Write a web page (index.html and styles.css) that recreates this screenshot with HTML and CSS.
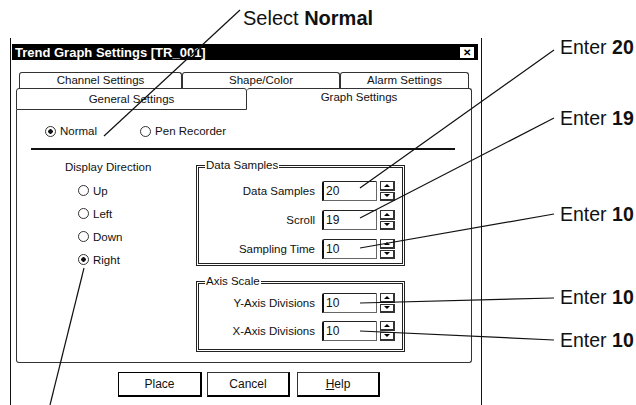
FILE: index.html
```html
<!doctype html>
<html lang="en">
    <head>
        <meta charset="UTF-8" />
        <title>Trend Graph Settings</title>
        <link rel="stylesheet" href="styles.css">
    </head>
    <body>
        <div class="note-top">Select <b>Normal</b></div>

        <div class="stage">
            <div class="dialog">
                <div class="titlebar">
                    <span>Trend Graph Settings [TR_001]</span>
                    <span class="close">&#x2715;</span>
                </div>

                <div class="tabs tabs-back">
                    <div class="tab t-channel">Channel Settings</div>
                    <div class="tab t-shape">Shape/Color</div>
                    <div class="tab t-alarm">Alarm Settings</div>
                </div>
                <div class="tabs tabs-front">
                    <div class="tab t-general">General Settings</div>
                    <div class="tab t-graph">Graph Settings</div>
                </div>

                <div class="panel">
                    <div class="mode-row">
                        <label class="radio on"><i></i>Normal</label>
                        <label class="radio"><i></i>Pen Recorder</label>
                    </div>
                    <div class="rule"></div>

                    <div class="panel-body">
                        <div class="direction">
                            <div class="dir-title">Display Direction</div>
                            <div class="dir-list">
                                <label class="radio"><i></i>Up</label>
                                <label class="radio"><i></i>Left</label>
                                <label class="radio"><i></i>Down</label>
                                <label class="radio on"><i></i>Right</label>
                            </div>
                        </div>

                        <div class="groups">
                            <div class="group g-data">
                                <span class="legend">Data Samples</span>
                                <div class="field">
                                    <span class="flabel">Data Samples</span>
                                    <span class="box">20</span>
                                    <span class="spin"><b class="up"></b><b class="down"></b></span>
                                </div>
                                <div class="field">
                                    <span class="flabel">Scroll</span>
                                    <span class="box">19</span>
                                    <span class="spin"><b class="up"></b><b class="down"></b></span>
                                </div>
                                <div class="field">
                                    <span class="flabel">Sampling Time</span>
                                    <span class="box">10</span>
                                    <span class="spin"><b class="up"></b><b class="down"></b></span>
                                </div>
                            </div>

                            <div class="group g-axis">
                                <span class="legend">Axis Scale</span>
                                <div class="field">
                                    <span class="flabel">Y-Axis Divisions</span>
                                    <span class="box">10</span>
                                    <span class="spin"><b class="up"></b><b class="down"></b></span>
                                </div>
                                <div class="field">
                                    <span class="flabel">X-Axis Divisions</span>
                                    <span class="box">10</span>
                                    <span class="spin"><b class="up"></b><b class="down"></b></span>
                                </div>
                            </div>
                        </div>
                    </div>
                </div>

                <div class="buttons">
                    <button class="btn default">Place</button>
                    <button class="btn">Cancel</button>
                    <button class="btn"><u>H</u>elp</button>
                </div>
            </div>

            <ul class="callouts">
                <li class="c1">Enter <b>20</b></li>
                <li class="c2">Enter <b>19</b></li>
                <li class="c3">Enter <b>10</b></li>
                <li class="c4">Enter <b>10</b></li>
                <li class="c5">Enter <b>10</b></li>
            </ul>
        </div>

        <!-- leader lines from the callouts to the controls -->
        <svg class="leaders" width="636" height="405" viewBox="0 0 636 405">
            <g stroke="#111" stroke-width="1.2" fill="none">
                <line x1="240" y1="10" x2="104" y2="136" />
                <line x1="554" y1="50" x2="360" y2="188" />
                <line x1="554" y1="118" x2="360" y2="218" />
                <line x1="554" y1="214" x2="360" y2="248" />
                <line x1="554" y1="298" x2="360" y2="303" />
                <line x1="554" y1="340" x2="360" y2="331" />
                <line x1="84" y1="268" x2="50" y2="405" />
            </g>
        </svg>
    </body>
</html>
```

FILE: styles.css
```css
* {
    box-sizing: border-box;
}
body {
    margin: 0;
    width: 636px;
    height: 405px;
    overflow: hidden;
    position: relative;
    background: #fff;
    color: #111;
    font-family: "Liberation Sans", Arial, sans-serif;
}

/* callout text */
.note-top {
    height: 38px;
    padding: 7px 0 0 243px;
    font-size: 20px;
    line-height: 22px;
}
.stage {
    display: flex;
    align-items: flex-start;
}
.callouts {
    flex: none;
    list-style: none;
    margin: 0;
    padding: 0 0 0 78px;
    font-size: 19.5px;
    line-height: 20px;
    white-space: nowrap;
}
.c1 { margin-top: -1px; }
.c2 { margin-top: 51px; }
.c3 { margin-top: 76px; }
.c4 { margin-top: 63px; }
.c5 { margin-top: 23px; }

/* dialog window */
.dialog {
    flex: none;
    margin-left: 10px;
    width: 472px;
    height: 367px;
    border-left: 1px solid #111;
    border-right: 1px solid #111;
    padding: 6px 3px 0 1px;
    font-size: 11.5px;
}
.titlebar {
    height: 16px;
    background: #000;
    color: #fff;
    font-size: 13px;
    font-weight: bold;
    display: flex;
    align-items: center;
    justify-content: space-between;
    padding: 0 3px 0 3px;
}
.close {
    width: 16px;
    height: 13px;
    background: #fff;
    color: #000;
    border: 1px solid #000;
    font-size: 10px;
    line-height: 11px;
    text-align: center;
}

/* tabs */
.tabs {
    display: flex;
}
.tabs-back {
    margin: 12px 0 0 7px;
}
.tabs-front {
    margin: 0 6px 0 4px;
}
.tab {
    height: 16px;
    border: 1px solid #333;
    border-bottom: none;
    border-radius: 3px 3px 0 0;
    text-align: center;
    line-height: 15px;
}
.t-channel { width: 163px; }
.t-shape { width: 158px; }
.t-alarm { width: 129px; }
.t-general {
    width: 231px;
    height: 22px;
    border-bottom: 1px solid #333;
    line-height: 20px;
}
.t-graph {
    flex: 1;
    height: 22px;
    border-left: none;
    line-height: 17px;
}

/* tab page */
.panel {
    margin: 0 6px 0 4px;
    height: 253px;
    border: 1px solid #333;
    border-top: none;
    border-radius: 0 0 3px 3px;
    padding: 14px 0 0 0;
}
.mode-row {
    display: flex;
    padding-left: 28px;
    height: 14px;
}
.mode-row .radio:first-child {
    margin-right: 43px;
}
.radio {
    display: flex;
    align-items: center;
    gap: 4px;
    line-height: 14px;
}
.radio i {
    width: 11px;
    height: 11px;
    border: 1.5px solid #333;
    border-radius: 50%;
    background: #fff;
}
.radio.on i {
    background: radial-gradient(circle, #111 0 2px, #fff 2.5px);
}
.rule {
    height: 2px;
    background: #111;
    margin: 10px 16px 0 14px;
}
.panel-body {
    display: flex;
}
.direction {
    width: 179px;
    padding: 10px 0 0 48px;
}
.dir-title {
    line-height: 14px;
}
.dir-list {
    margin: 5px 0 0 13px;
}
.dir-list .radio {
    height: 23px;
}

/* group boxes */
.groups {
    width: 209px;
    margin-top: 15px;
}
.group {
    border: 3px double #222;
}
.g-data {
    padding: 0 0 4px 0;
}
.g-axis {
    margin-top: 15px;
    padding: 0 0 8px 0;
}
.legend {
    display: block;
    width: max-content;
    height: 13px;
    line-height: 13px;
    margin: -9px 0 0 6px;
    padding: 0 1px;
    background: #fff;
}
.g-data .field {
    margin-top: 9px;
}
.g-axis .field {
    margin-top: 5px;
}
.g-axis .field + .field {
    margin-top: 8px;
}
.field {
    display: flex;
    height: 20px;
    align-items: center;
}
.flabel {
    width: 116px;
    text-align: right;
}
.box {
    width: 55px;
    height: 20px;
    margin-left: 7px;
    border-top: 1px solid #222;
    border-left: 2px solid #111;
    border-right: 1px solid #666;
    border-bottom: 1px solid #666;
    border-radius: 2px 0 0 0;
    padding-left: 2px;
    font-size: 12px;
    line-height: 18px;
}
.spin {
    width: 15px;
    height: 20px;
    margin-left: 3px;
    display: flex;
    flex-direction: column;
    gap: 1px;
}
.spin b {
    flex: 1;
    border: 1px solid #333;
    border-right-width: 2px;
    border-bottom-width: 2px;
    display: flex;
    align-items: center;
    justify-content: center;
}
.spin b::after {
    content: "";
    border-left: 3px solid transparent;
    border-right: 3px solid transparent;
}
.spin .up::after {
    border-bottom: 3px solid #000;
}
.spin .down::after {
    border-top: 3px solid #000;
}

/* bottom buttons */
.buttons {
    display: flex;
    margin: 9px 0 0 106px;
}
.btn {
    height: 25px;
    width: 83px;
    margin-right: 7px;
    background: #fff;
    color: #111;
    border: 1px solid #333;
    border-right: 2px solid #000;
    border-bottom: 2px solid #000;
    font-family: "Liberation Sans", Arial, sans-serif;
    font-size: 12px;
    padding: 0;
}
.btn.default {
    width: 84px;
    margin-right: 5px;
    border-color: #000;
}
.btn u {
    text-decoration: underline;
}

.leaders {
    position: absolute;
    top: 0;
    left: 0;
    pointer-events: none;
}
```
